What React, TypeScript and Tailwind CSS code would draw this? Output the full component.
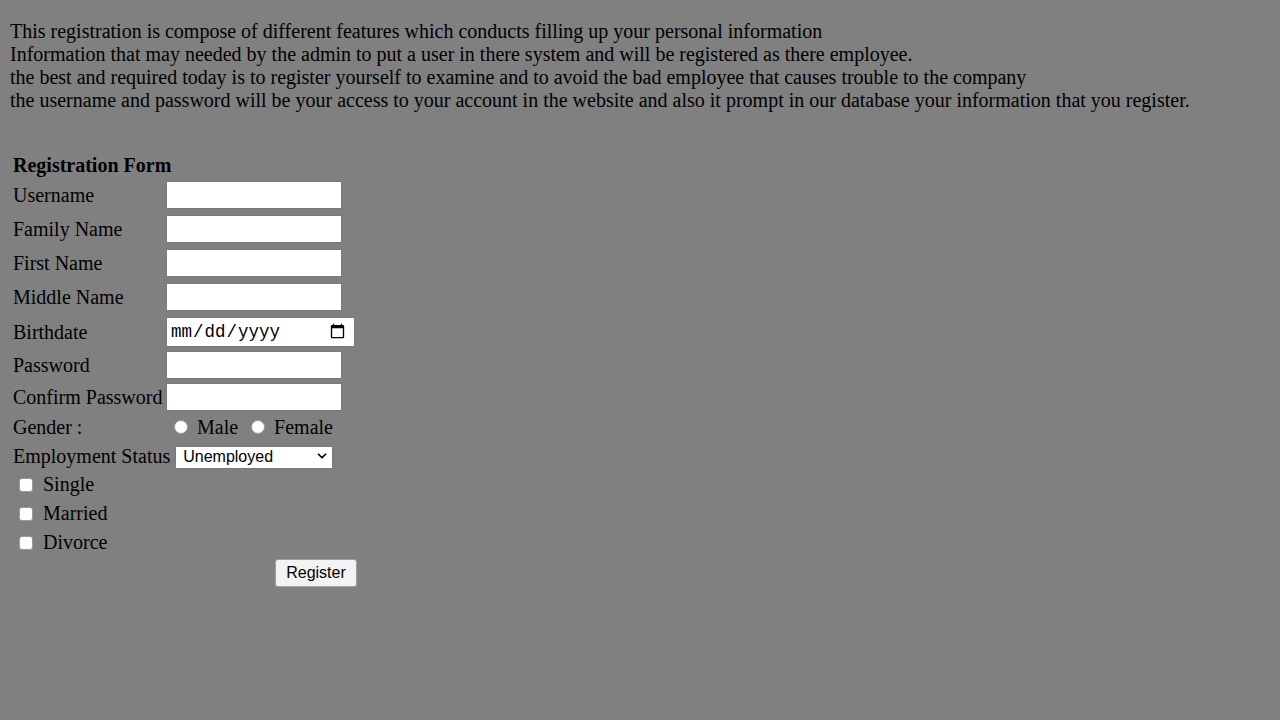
import { ChevronDown } from 'lucide-react'

const serif = { fontFamily: '"Liberation Serif", "Times New Roman", serif' }

function TextRow({ label, mt, type = 'text' }: { label: string; mt: string; type?: string }) {
  return (
    <div className={`flex items-center ${mt}`}>
      <label className="w-[153px] text-[20px] leading-[23px]">{label}</label>
      <input
        type={type}
        className="w-[176px] h-[28px] bg-white border border-[#7a7a7a] px-1 outline-none"
      />
    </div>
  )
}

export default function App() {
  return (
    <div
      className="min-h-screen bg-[#808080] text-black pt-[20px] px-[10px]"
      style={serif}
    >
      {/* intro */}
      <p className="text-[20px] leading-[23px]">
        This registration is compose of different features which conducts filling up your personal information
        <br />
        Information that may needed by the admin to put a user in there system and will be registered as there employee.
        <br />
        the best and required today is to register yourself to examine and to avoid the bad employee that causes trouble to the company
        <br />
        the username and password will be your access to your account in the website and also it prompt in our database your information that you register.
      </p>

      {/* form */}
      <form className="ml-[3px] mt-[42px] w-[344px] flex flex-col" onSubmit={(e) => e.preventDefault()}>
        <div className="text-[20px] leading-[23px] font-bold">Registration Form</div>

        <TextRow label="Username" mt="mt-[4px]" />
        <TextRow label="Family Name" mt="mt-[6px]" />
        <TextRow label="First Name" mt="mt-[6px]" />
        <TextRow label="Middle Name" mt="mt-[6px]" />

        <div className="flex items-center mt-[6px]">
          <label className="w-[153px] text-[20px] leading-[23px]">Birthdate</label>
          <input
            type="date"
            className="w-[189px] h-[30px] bg-white border border-[#7a7a7a] pl-[3px] pr-[6px] text-[17.5px] outline-none"
            style={{ fontFamily: '"Liberation Mono", "Courier New", monospace' }}
          />
        </div>

        <TextRow label="Password" mt="mt-[4px]" type="password" />
        <TextRow label="Confirm Password" mt="mt-[4px]" type="password" />

        <div className="flex items-center mt-[4px] h-[24px] text-[20px] leading-[23px]">
          <span className="w-[153px]">Gender :</span>
          <input
            type="radio"
            name="gender"
            className="appearance-none ml-[8px] w-[14px] h-[14px] rounded-full bg-white border border-[#9a9a9a]"
          />
          <span className="ml-[9px]">Male</span>
          <input
            type="radio"
            name="gender"
            className="appearance-none ml-[13px] w-[14px] h-[14px] rounded-full bg-white border border-[#9a9a9a]"
          />
          <span className="ml-[9px]">Female</span>
        </div>

        <div className="flex items-center mt-[5px] text-[20px] leading-[23px]">
          <span>Employment Status</span>
          <div className="relative ml-[5px]">
            <select
              className="appearance-none w-[158px] h-[23px] bg-white border border-[#7a7a7a] pl-[7px] text-[16px] leading-[20px] outline-none"
              style={{ fontFamily: '"Liberation Sans", Arial, sans-serif' }}
              defaultValue="Unemployed"
            >
              <option>Unemployed</option>
              <option>Employed</option>
              <option>Self-Employed</option>
            </select>
            <ChevronDown
              size={14}
              strokeWidth={3}
              className="absolute right-[4px] top-[5px] pointer-events-none"
            />
          </div>
        </div>

        {['Single', 'Married', 'Divorce'].map((s, i) => (
          <label
            key={s}
            className={`flex items-center h-[24px] text-[20px] leading-[23px] ${i === 0 ? 'mt-[4px]' : 'mt-[5px]'}`}
          >
            <input
              type="checkbox"
              className="appearance-none ml-[6px] w-[14px] h-[14px] rounded-[3px] bg-white border border-[#9a9a9a]"
            />
            <span className="ml-[10px]">{s}</span>
          </label>
        ))}

        <div className="flex justify-end mt-[4px]">
          <button
            type="submit"
            className="w-[82px] h-[28px] bg-[#f3f3f3] border border-[#a0a0a0] rounded-[3px] text-[16px] text-black"
            style={{ fontFamily: '"Liberation Sans", Arial, sans-serif' }}
          >
            Register
          </button>
        </div>
      </form>
    </div>
  )
}
